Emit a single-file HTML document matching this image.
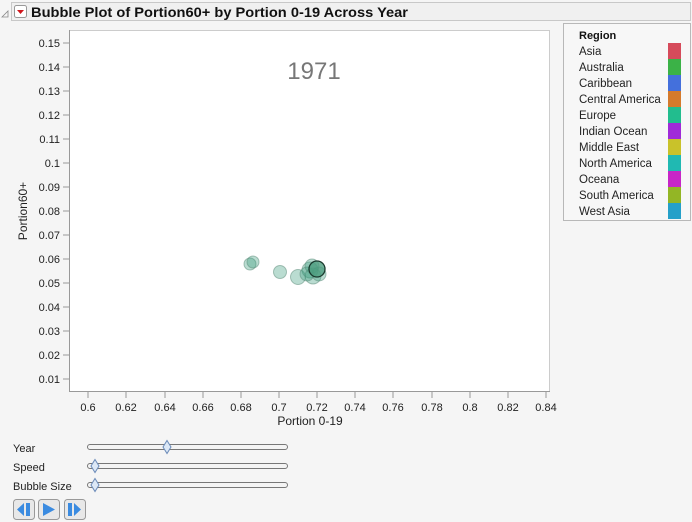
<!DOCTYPE html>
<html><head><style>
body{margin:0;width:692px;height:522px;background:#f5f5f5;font-family:"Liberation Sans",sans-serif;overflow:hidden;position:relative}
</style></head><body>
<svg width="692" height="522" style="position:absolute;left:0;top:0" font-family="Liberation Sans, sans-serif">
<path d="M2 17 L8 11 L8 17 Z" fill="none" stroke="#888" stroke-width="0.8"/>
<rect x="11.5" y="2.5" width="679" height="18" fill="#f0f0f0" stroke="#c8c8c8"/>
<rect x="14.5" y="5.5" width="12" height="12" rx="2" fill="#fff" stroke="#999"/>
<path d="M17 10 L24 10 L20.5 14 Z" fill="#d0161c"/>
<text x="31" y="17" font-size="14" font-weight="bold" fill="#111" textLength="377" lengthAdjust="spacingAndGlyphs">Bubble Plot of Portion60+  by Portion 0-19 Across Year</text>
<rect x="69.5" y="30.5" width="480" height="361" fill="#fff" stroke="#ccc"/>
<line x1="69.5" y1="30" x2="69.5" y2="392" stroke="#999"/>
<line x1="69" y1="391.5" x2="550" y2="391.5" stroke="#999"/>
<g stroke="#999">
<line x1="63" y1="43" x2="69" y2="43"/><line x1="63" y1="67" x2="69" y2="67"/><line x1="63" y1="91" x2="69" y2="91"/><line x1="63" y1="115" x2="69" y2="115"/><line x1="63" y1="139" x2="69" y2="139"/><line x1="63" y1="163" x2="69" y2="163"/><line x1="63" y1="187" x2="69" y2="187"/><line x1="63" y1="211" x2="69" y2="211"/><line x1="63" y1="235" x2="69" y2="235"/><line x1="63" y1="259" x2="69" y2="259"/><line x1="63" y1="283" x2="69" y2="283"/><line x1="63" y1="307" x2="69" y2="307"/><line x1="63" y1="331" x2="69" y2="331"/><line x1="63" y1="355" x2="69" y2="355"/><line x1="63" y1="379" x2="69" y2="379"/>
<line x1="88" y1="392" x2="88" y2="398"/><line x1="126" y1="392" x2="126" y2="398"/><line x1="165" y1="392" x2="165" y2="398"/><line x1="203" y1="392" x2="203" y2="398"/><line x1="241" y1="392" x2="241" y2="398"/><line x1="279" y1="392" x2="279" y2="398"/><line x1="317" y1="392" x2="317" y2="398"/><line x1="355" y1="392" x2="355" y2="398"/><line x1="393" y1="392" x2="393" y2="398"/><line x1="432" y1="392" x2="432" y2="398"/><line x1="470" y1="392" x2="470" y2="398"/><line x1="508" y1="392" x2="508" y2="398"/><line x1="546" y1="392" x2="546" y2="398"/>
</g>
<g font-size="11" fill="#222" text-anchor="end">
<text x="60" y="47">0.15</text><text x="60" y="71">0.14</text><text x="60" y="95">0.13</text><text x="60" y="119">0.12</text><text x="60" y="143">0.11</text><text x="60" y="167">0.1</text><text x="60" y="191">0.09</text><text x="60" y="215">0.08</text><text x="60" y="239">0.07</text><text x="60" y="263">0.06</text><text x="60" y="287">0.05</text><text x="60" y="311">0.04</text><text x="60" y="335">0.03</text><text x="60" y="359">0.02</text><text x="60" y="383">0.01</text>
</g>
<g font-size="11" fill="#222" text-anchor="middle">
<text x="88" y="411">0.6</text><text x="126" y="411">0.62</text><text x="165" y="411">0.64</text><text x="203" y="411">0.66</text><text x="241" y="411">0.68</text><text x="279" y="411">0.7</text><text x="317" y="411">0.72</text><text x="355" y="411">0.74</text><text x="393" y="411">0.76</text><text x="432" y="411">0.78</text><text x="470" y="411">0.8</text><text x="508" y="411">0.82</text><text x="546" y="411">0.84</text>
</g>
<text x="310" y="425" font-size="12" fill="#222" text-anchor="middle">Portion 0-19</text>
<text transform="translate(27 211) rotate(-90)" font-size="12" fill="#222" text-anchor="middle">Portion60+</text>
<text x="314" y="79" font-size="24" fill="#777" text-anchor="middle">1971</text>
<g fill="#3a9c7a" fill-opacity="0.35" stroke="#5a8a78" stroke-opacity="0.5">
<circle cx="250" cy="264" r="6"/><circle cx="253" cy="262" r="6"/>
<circle cx="280" cy="272" r="6.5"/>
<circle cx="298" cy="277" r="7.5"/>
<circle cx="310" cy="270" r="8"/><circle cx="313" cy="276" r="8"/><circle cx="307" cy="274" r="7"/><circle cx="319" cy="274" r="7"/><circle cx="312" cy="266" r="7"/>
</g>
<circle cx="317" cy="269" r="8" fill="#4e9e80" fill-opacity="0.8" stroke="#1a3a2e" stroke-width="1.3"/>
<rect x="563.5" y="23.5" width="127" height="197" fill="#f7f7f7" stroke="#b8b8b8"/>
<text x="579" y="39" font-size="11" font-weight="bold" fill="#111">Region</text>
<g font-size="11.5" fill="#222">
<text x="579" y="55">Asia</text><text x="579" y="71">Australia</text><text x="579" y="87">Caribbean</text><text x="579" y="103">Central America</text><text x="579" y="119">Europe</text><text x="579" y="135">Indian Ocean</text><text x="579" y="151">Middle East</text><text x="579" y="167">North America</text><text x="579" y="183">Oceana</text><text x="579" y="199">South America</text><text x="579" y="215">West Asia</text>
</g>
<rect x="668" y="43" width="13" height="16" fill="#d64b5b"/><rect x="668" y="59" width="13" height="16" fill="#3bb247"/><rect x="668" y="75" width="13" height="16" fill="#4470dc"/><rect x="668" y="91" width="13" height="16" fill="#d57a2c"/><rect x="668" y="107" width="13" height="16" fill="#22bd8e"/><rect x="668" y="123" width="13" height="16" fill="#a02bd8"/><rect x="668" y="139" width="13" height="16" fill="#c9c22a"/><rect x="668" y="155" width="13" height="16" fill="#20b9b2"/><rect x="668" y="171" width="13" height="16" fill="#c726c7"/><rect x="668" y="187" width="13" height="16" fill="#93b625"/><rect x="668" y="203" width="13" height="16" fill="#25a0c9"/>
<g font-size="11" fill="#222"><text x="13" y="452">Year</text><text x="13" y="471">Speed</text><text x="13" y="490">Bubble Size</text></g>
<g fill="#f4f4f4" stroke="#777"><rect x="87.5" y="444.5" width="200" height="5" rx="2.5"/><rect x="87.5" y="463.5" width="200" height="5" rx="2.5"/><rect x="87.5" y="482.5" width="200" height="5" rx="2.5"/></g>
<g fill="#dce8f6" stroke="#6a8ab8"><path d="M167 440.5 L171 447 L167 453.5 L163 447 Z"/><path d="M95 459.5 L99 466 L95 472.5 L91 466 Z"/><path d="M95 478.5 L99 485 L95 491.5 L91 485 Z"/></g>
<g fill="#e8e8e8" stroke="#999"><rect x="13.5" y="499.5" width="21" height="20" rx="3"/><rect x="38.5" y="499.5" width="21" height="20" rx="3"/><rect x="64.5" y="499.5" width="21" height="20" rx="3"/></g>
<g fill="#3b8be0"><path d="M24 503 L24 516 L17 509.5 Z"/><rect x="26" y="503" width="4" height="13"/><path d="M43 503 L43 516 L55 509.5 Z"/><rect x="68" y="503" width="4" height="13"/><path d="M74 503 L74 516 L81 509.5 Z"/></g>
</svg>
</body></html>
